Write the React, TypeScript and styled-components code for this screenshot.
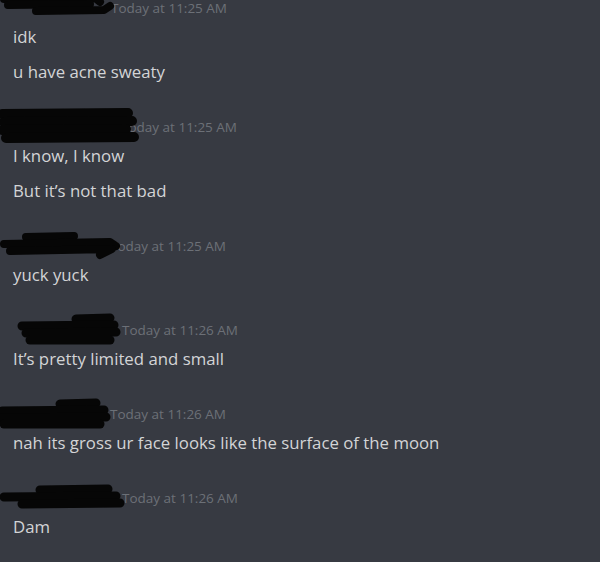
import React from "react";
import styled, { createGlobalStyle } from "styled-components";

const Global = createGlobalStyle`
  html, body { margin: 0; padding: 0; background: #373a42; }
  body { width: 600px; height: 562px; overflow: hidden; }
`;

const Feed = styled.div`
  width: 600px;
  height: 562px;
  box-sizing: border-box;
  background: #373a42;
  padding: 0 13px;
  margin-top: -2px;
  font-family: "Open Sans", "Noto Sans", sans-serif;
  overflow: hidden;
`;

const Group = styled.div`
  display: flex;
  flex-direction: column;
  padding-bottom: 35px;
`;

const Header = styled.div`
  position: relative;
  height: 20px;
  display: flex;
  align-items: center;
  margin-left: -13px;
`;

const NameSlot = styled.span<{ $w: number }>`
  display: inline-block;
  flex: none;
  width: ${(p) => p.$w}px;
`;

const Stamp = styled.span`
  font-size: 13.5px;
  line-height: 20px;
  color: #6c7077;
  white-space: nowrap;
`;

const Scribble = styled.svg`
  position: absolute;
  left: 0;
  top: 50%;
  transform: translateY(-50%);
  overflow: visible;
`;

const Line = styled.div`
  font-size: 16.8px;
  line-height: 20px;
  color: #d3d4d6;
  white-space: nowrap;
  margin-top: 15px;
  ${Header} + & { margin-top: 9px; }
`;

type Msg = {
  nameW: number;
  time: string;
  lines: string[];
  scribble: { w: number; h: number; paths: string[]; sw: number };
};

const msgs: Msg[] = [
  {
    nameW: 111,
    time: "Today at 11:25 AM",
    lines: ["idk", "u have acne sweaty"],
    scribble: {
      w: 112,
      h: 24,
      sw: 8,
      paths: [
        "M4 3 L95 2 L100 6",
        "M8 9 L90 8",
        "M36 15 L104 14 L110 10",
      ],
    },
  },
  {
    nameW: 121,
    time: "Today at 11:25 AM",
    lines: ["I know, I know", "But it\u2019s not that bad"],
    scribble: {
      w: 136,
      h: 36,
      sw: 10,
      paths: [
        "M2 5 L128 4",
        "M4 13 L132 12",
        "M2 21 L126 20",
        "M6 29 L134 28",
      ],
    },
  },
  {
    nameW: 110,
    time: "Today at 11:25 AM",
    lines: ["yuck yuck"],
    scribble: {
      w: 120,
      h: 24,
      sw: 8,
      paths: [
        "M26 3 L74 2",
        "M4 10 L110 8 L116 12",
        "M10 17 L112 15 L100 21",
      ],
    },
  },
  {
    nameW: 122,
    time: "Today at 11:26 AM",
    lines: ["It\u2019s pretty limited and small"],
    scribble: {
      w: 118,
      h: 28,
      sw: 9,
      paths: [
        "M76 3 L110 2",
        "M22 10 L114 9",
        "M26 17 L116 16",
        "M30 24 L110 24",
      ],
    },
  },
  {
    nameW: 110,
    time: "Today at 11:26 AM",
    lines: ["nah its gross ur face looks like the surface of the moon"],
    scribble: {
      w: 112,
      h: 28,
      sw: 9,
      paths: [
        "M60 4 L96 3",
        "M2 11 L104 10",
        "M2 18 L106 17",
        "M4 24 L100 24",
      ],
    },
  },
  {
    nameW: 122,
    time: "Today at 11:26 AM",
    lines: ["Dam"],
    scribble: {
      w: 124,
      h: 24,
      sw: 9,
      paths: [
        "M40 4 L108 3",
        "M4 11 L116 10",
        "M22 18 L120 17",
      ],
    },
  },
];

export default function App() {
  return (
    <>
      <Global />
      <Feed>
        {msgs.map((m, i) => (
          <Group key={i}>
            <Header>
              <NameSlot $w={m.nameW} />
              <Stamp>{m.time}</Stamp>
              <Scribble
                width={m.scribble.w}
                height={m.scribble.h}
                viewBox={`0 0 ${m.scribble.w} ${m.scribble.h}`}
              >
                {m.scribble.paths.map((d, j) => (
                  <path
                    key={j}
                    d={d}
                    fill="none"
                    stroke="#060606"
                    strokeWidth={m.scribble.sw}
                    strokeLinecap="round"
                    strokeLinejoin="round"
                  />
                ))}
              </Scribble>
            </Header>
            {m.lines.map((l, j) => (
              <Line key={j}>{l}</Line>
            ))}
          </Group>
        ))}
      </Feed>
    </>
  );
}
